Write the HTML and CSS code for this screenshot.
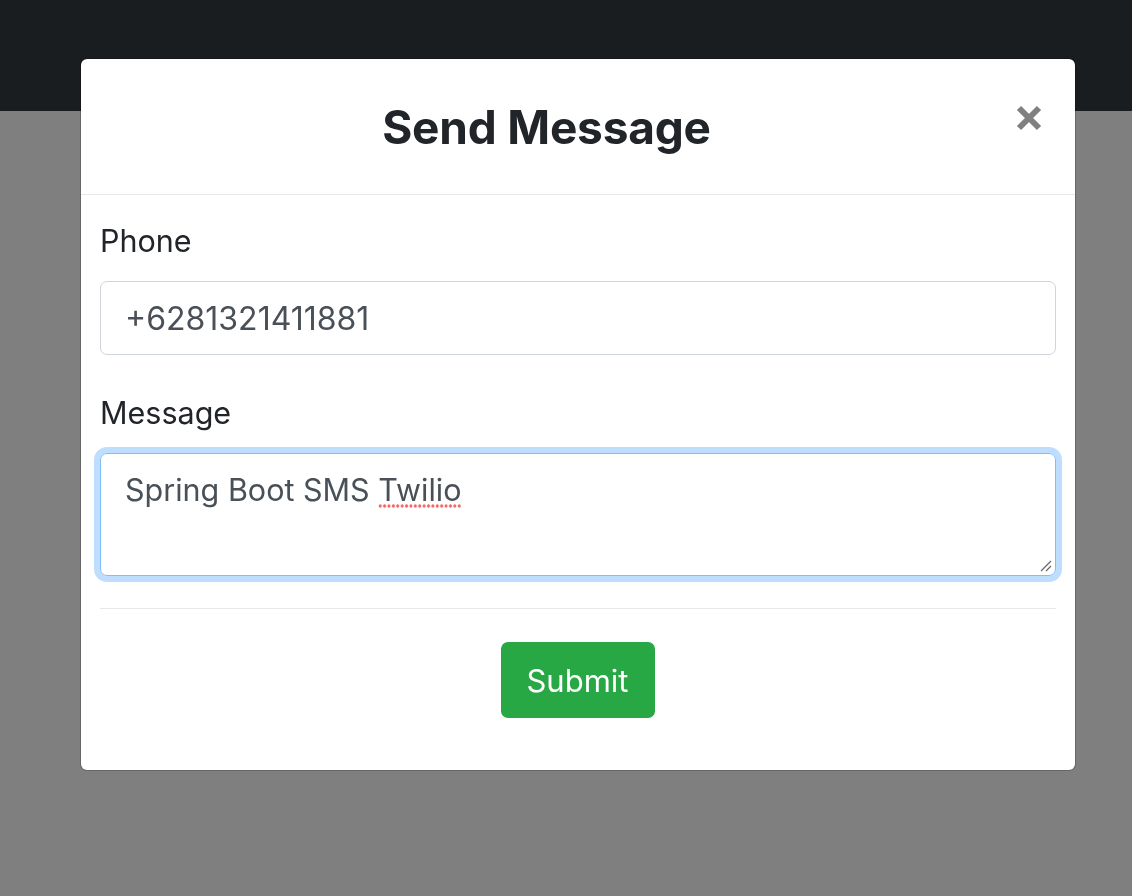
FILE: index.html
```html
<!DOCTYPE html>
<html lang="en">
<head>
<meta charset="utf-8">
<title>Send Message</title>
<link rel="stylesheet" href="styles.css">
</head>
<body>
  <nav class="navbar"></nav>
  <main class="page"></main>
  <div class="backdrop"></div>
  <div class="modal">
    <div class="modal-dialog">
      <header class="modal-header">
        <h2 class="modal-title">Send Message</h2>
        <button class="close" type="button" aria-label="Close">
          <svg viewBox="0 0 26 26" width="26" height="26" aria-hidden="true">
            <path d="M3 3 L23 23 M23 3 L3 23" stroke="#808080" stroke-width="6" fill="none"/>
          </svg>
        </button>
      </header>
      <div class="modal-body">
        <div class="form-group">
          <label class="label">Phone</label>
          <div class="input">+6281321411881</div>
        </div>
        <div class="form-group form-group-last">
          <label class="label">Message</label>
          <div class="textarea">Spring Boot SMS <span class="misspelled">Twilio</span>
            <svg class="grip" viewBox="0 0 12 12" width="12" height="12" aria-hidden="true">
              <path d="M1 11 L11 1 M6 11 L11 6" stroke="#666" stroke-width="1.2" fill="none"/>
            </svg>
          </div>
        </div>
        <hr class="divider">
        <div class="actions">
          <button class="btn-submit" type="button">Submit</button>
        </div>
      </div>
    </div>
  </div>
</body>
</html>
```

FILE: styles.css
```css
html, body {
  margin: 0;
  padding: 0;
  height: 100%;
}
body {
  background: #ffffff;
  font-family: Inter, "Noto Sans", "Liberation Sans", sans-serif;
  color: #212529;
  overflow: hidden;
}
.navbar {
  height: 111px;
  background: #343a40;
}
.backdrop {
  position: fixed;
  inset: 0;
  background: rgba(0, 0, 0, 0.5);
}
.modal {
  position: fixed;
  inset: 0;
}
.modal-dialog {
  margin: 58px 0 0 80px;
  width: 994px;
  background: #fff;
  border: 1px solid rgba(0, 0, 0, 0.2);
  border-radius: 7px;
  background-clip: padding-box;
}
.modal-header {
  position: relative;
  height: 135px;
  padding-right: 63px;
  border-bottom: 1px solid #e6e8eb;
  display: flex;
  align-items: center;
  justify-content: center;
}
.modal-title {
  margin: 0;
  font-size: 46px;
  font-weight: 700;
  letter-spacing: -0.2px;
  color: #212529;
  line-height: 1;
}
.close {
  position: absolute;
  right: 33px;
  top: 46px;
  padding: 0;
  border: 0;
  background: none;
  width: 26px;
  height: 26px;
  display: flex;
}
.modal-body {
  padding: 23px 19px 52px;
}
.form-group {
  display: flex;
  flex-direction: column;
  margin-bottom: 35px;
}
.form-group-last {
  margin-bottom: 32px;
}
.label {
  font-size: 30.5px;
  line-height: 45px;
  margin-bottom: 18px;
  color: #212529;
}
.input {
  height: 72px;
  border: 1px solid #ced4da;
  border-radius: 7px;
  padding: 0 24px;
  display: flex;
  align-items: center;
  font-size: 32px;
  color: #495057;
}
.textarea {
  position: relative;
  box-sizing: border-box;
  height: 123px;
  border: 1px solid #80bdff;
  border-radius: 7px;
  box-shadow: 0 0 0 6px #bfdeff;
  padding: 13px 24px;
  font-size: 30.5px;
  line-height: 45px;
  color: #495057;
}
.misspelled {
  position: relative;
}
.misspelled::after {
  content: "";
  position: absolute;
  left: 0;
  right: 0;
  bottom: 0;
  height: 4px;
  background: radial-gradient(circle, #f46a6a 1.4px, transparent 1.9px) 0 0 / 4.4px 4px repeat-x;
}
.grip {
  position: absolute;
  right: 3px;
  bottom: 3px;
}
.divider {
  margin: 0;
  border: 0;
  border-top: 1px solid #e6e8eb;
}
.actions {
  display: flex;
  justify-content: center;
  padding-top: 33px;
}
.btn-submit {
  width: 154px;
  height: 76px;
  border: 0;
  border-radius: 7px;
  background: #28a745;
  color: #fff;
  font-family: inherit;
  font-size: 31px;
  padding: 0;
  margin-right: 1px;
}
```
